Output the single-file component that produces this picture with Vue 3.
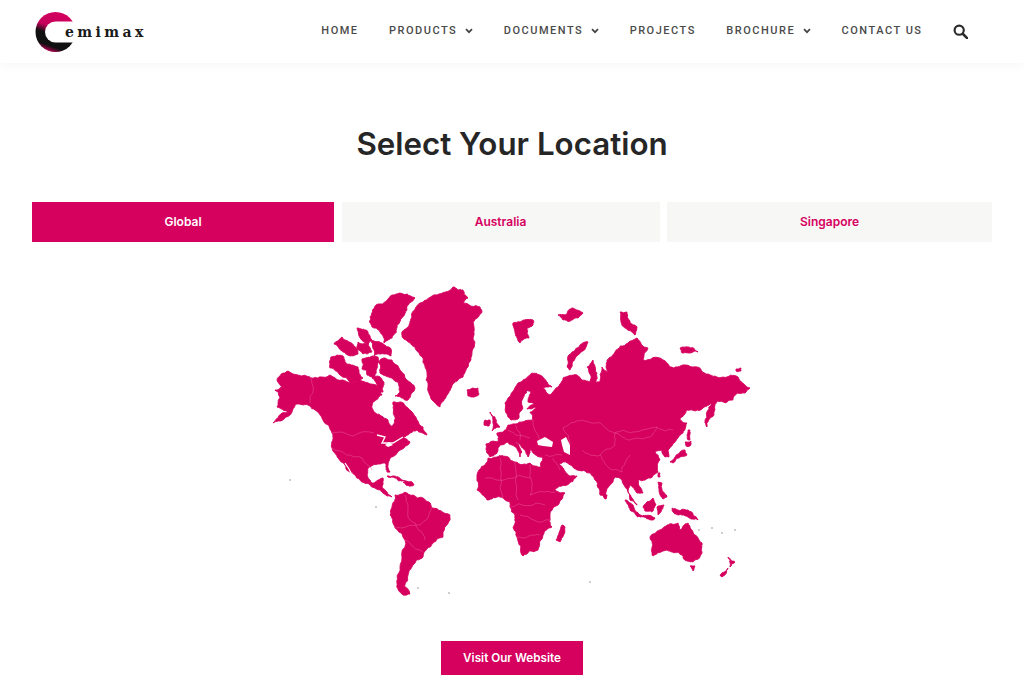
<script setup>
const navItems = [
  { label: 'HOME' },
  { label: 'PRODUCTS', caret: true },
  { label: 'DOCUMENTS', caret: true },
  { label: 'PROJECTS' },
  { label: 'BROCHURE', caret: true },
  { label: 'CONTACT US' }
];

const tabs = ['Global', 'Australia', 'Singapore'];

// map shapes, coordinates match the svg viewBox
const land = [
  // north + central america
  '277,380 288,371 310,377 318,378 330,375 343,380 348,382 367,385 377,387 382,395 373,402 372,408 380,415 388,420 392,427 395,417 393,402 400,402 408,408 417,420 423,427 427,435 417,430 410,433 403,437 410,442 397,453 390,458 388,465 390,472 387,472 385,463 368,468 367,475 372,483 380,479 383,478 382,487 387,492 392,497 383,493 375,488 362,482 355,475 345,465 338,458 332,448 332,433 323,420 315,410 303,405 295,405 292,412 273,423 288,412 277,407 280,397 275,390 282,387',
  // arctic islands
  '415,298 407,294 392,295 378,304 370,317 372,327 380,332 384,343 392,338 397,325 407,310',
  '334,344 342,337 349,342 357,349 358,354 350,356 342,351',
  '357,328 366,330 372,340 368,344 360,338',
  '358,342 368,343 372,352 363,354 357,349',
  '371,340 382,343 391,349 391,356 374,356',
  '331,357 343,356 345,362 358,367 363,378 350,382 340,375 330,368',
  '362,359 369,357 369,370 362,369',
  '370,357 378,357 377,368 373,378 367,375',
  '378,362 385,358 392,360 400,370 407,380 415,388 408,400 405,400 395,396 400,392 398,382 392,378 386,376 380,373',
  '350,382 362,381 370,384 378,386 372,378 378,376 384,382 383,392 376,388 360,388',
  // greenland + iceland
  '420,303 437,295 453,287 463,290 468,298 463,303 480,307 482,312 473,322 473,338 472,352 468,367 463,377 452,385 447,395 440,407 432,400 428,387 427,373 423,358 415,347 403,338 402,332 410,323 412,313',
  '467,390 478,388 479,394 474,397 468,396',
  // caribbean
  '387,476 394,476 402,480 408,482 399,481',
  '403,482 412,482 414,485 406,485',
  // south america
  '395,495 405,492 413,495 423,498 432,508 450,515 450,520 443,537 433,543 423,557 413,565 408,575 405,587 410,594 403,595 397,583 400,568 405,540 395,528 390,515 392,507',
  // eurasia
  '532,373 540,375 547,382 552,387 543,388 550,395 558,387 563,378 577,375 590,382 587,367 593,360 597,373 595,383 600,382 602,367 608,373 607,360 615,352 628,343 637,338 648,348 643,360 663,360 670,367 685,365 697,367 710,375 723,377 738,377 750,388 745,393 737,393 733,400 717,401 714,415 707,427 705,423 707,412 712,403 703,408 687,410 680,420 687,423 683,433 675,442 668,450 669,457 665,457 662,450 655,452 660,460 658,472 645,480 638,480 643,493 637,493 630,485 628,492 637,505 630,500 622,480 615,477 605,497 600,495 595,480 590,473 577,470 563,462 559,464 564,470 571,476 577,476 567,485 553,491 541,468 543,458 533,453 530,448 528,457 525,450 515,442 522,452 520,457 512,445 507,442 500,445 497,453 490,457 487,453 486,444 498,442 497,433 503,432 508,425 515,424 525,421 533,420 530,412 537,408 527,409 534,404 528,402 531,393 527,390 522,400 523,408 518,419 511,420 505,403 518,383',
  // africa
  '477,477 485,465 488,458 497,457 508,457 515,462 530,463 541,467 555,490 565,493 558,505 550,515 552,527 543,535 538,550 523,556 517,537 513,528 515,515 510,507 510,502 500,497 487,500 477,490',
  // uk, ireland
  '490,412 495,417 500,427 492,431 493,423',
  '485,420 490,420 489,426 484,425',
  // russian arctic
  '513,323 520,322 533,320 533,325 527,328 529,338 520,343 515,333',
  '558,315 565,315 573,308 583,313 578,318 572,320 563,320',
  '620,312 627,312 630,323 637,327 635,335 628,330 621,322',
  '588,342 578,355 570,370 567,367 572,352 580,345',
  '680,348 688,347 698,352 690,353 682,353',
  '736,369 741,368 741,371 736,371',
  // japan, east asia islands
  '670,462 685,450 687,455 673,463',
  '685,442 691,441 690,446 686,446',
  '688,430 690,430 690,440 688,440',
  '658,473 660,473 660,477 658,477',
  '658,482 662,483 662,490 667,497 663,499 659,490',
  '625,500 633,505 640,515 638,517 630,510',
  '638,515 655,518 653,520 640,517',
  '643,507 653,498 656,505 652,512 645,511',
  '657,507 664,505 661,512 658,515',
  '672,508 678,510 688,510 698,520 688,517 682,515 673,512',
  // oceania
  '650,537 660,530 667,525 678,523 680,530 688,523 695,535 702,543 702,553 693,562 685,560 678,552 667,550 653,556 652,547',
  '690,566 695,566 693,571',
  '728,557 735,562 730,567',
  '728,568 722,577 720,575',
  // madagascar, sri lanka
  '562,525 565,527 560,542 556,540',
  '604,494 607,495 606,499 604,498'
];

// white water bodies on top of the land
const water = [
  '537,441 545,437 553,442 552,447 543,446 538,445',
  '561,440 566,437 570,445 570,455 564,452 562,445',
  '385,445 389,442 393,445 388,447'
];

const channels = [
  '377,435 385,437 382,443 393,443 403,437',
  '345,463 349,469 352,475'
];

const borders = [
  '310,377 310,403', '332,433 374,433', '332,448 362,458 372,470',
  '563,428 582,420 600,423 615,433 633,432 657,427 673,430',
  '615,433 630,440 650,437 657,427',
  '563,428 570,445', '582,450 600,455 615,445 615,433',
  '600,455 612,470 622,472 630,455',
  '533,420 540,440', '515,425 520,440', '508,430 530,438',
  '545,455 562,455', '553,458 560,470',
  '485,478 530,478', '500,458 503,497', '515,462 518,500', '530,465 530,495',
  '510,507 545,505', '520,515 550,520', '517,537 540,535', '530,495 555,492',
  '405,495 410,520 425,540', '395,528 420,525 432,508', '405,540 423,552'
];

const specks = [
  [290, 480], [376, 507], [418, 588], [449, 593], [590, 582], [699, 530], [712, 528], [735, 530], [722, 533]
];

// midpoint displacement so the hand-plotted outlines read as coastline
let seed = 4711;
const rand = () => {
  seed = (seed * 16807) % 2147483647;
  return seed / 2147483647 - 0.5;
};

const roughen = (str, closed, amount) => {
  let pts = str.split(' ').map((p) => p.split(',').map(Number));
  for (let pass = 0; pass < 3; pass++) {
    const next = [];
    const count = closed ? pts.length : pts.length - 1;
    for (let i = 0; i < count; i++) {
      const a = pts[i];
      const b = pts[(i + 1) % pts.length];
      const dx = b[0] - a[0];
      const dy = b[1] - a[1];
      next.push(a);
      if (Math.hypot(dx, dy) < 2) continue;
      const k = rand() * amount;
      next.push([(a[0] + b[0]) / 2 - dy * k, (a[1] + b[1]) / 2 + dx * k]);
    }
    if (!closed) next.push(pts[pts.length - 1]);
    pts = next;
  }
  return pts.map((p) => p[0].toFixed(1) + ',' + p[1].toFixed(1)).join(' ');
};

const landShapes = land.map((p) => roughen(p, true, 0.3));
const borderLines = borders.map((p) => roughen(p, false, 0.3));
</script>

<template>
  <div class="page">
    <header class="site-header">
      <a class="logo">
        <svg class="logo__mark" viewBox="0 0 44 44" width="44" height="44">
          <defs>
            <linearGradient id="ring" x1="0.7" y1="0" x2="0.35" y2="1">
              <stop offset="0" stop-color="#d6005f" />
              <stop offset="0.42" stop-color="#c4005a" />
              <stop offset="0.6" stop-color="#111" />
              <stop offset="0.86" stop-color="#111" />
              <stop offset="1" stop-color="#c8005a" />
            </linearGradient>
          </defs>
          <circle cx="21.5" cy="22" r="20" fill="url(#ring)" />
          <rect x="11" y="11.5" width="40" height="21" rx="10.5" fill="#fff" />
        </svg>
        <span class="logo__text">emimax</span>
      </a>
      <nav class="nav">
        <span v-for="item in navItems" :key="item.label" class="nav__item">
          {{ item.label }}
          <svg v-if="item.caret" class="nav__caret" viewBox="0 0 8 6" width="8" height="6">
            <path d="M1 1.2L4 4.2L7 1.2" fill="none" stroke="#444" stroke-width="1.7" />
          </svg>
        </span>
        <svg class="nav__search" viewBox="0 0 16 16" width="15" height="15">
          <circle cx="6.6" cy="6.6" r="4.9" fill="none" stroke="#2b2b2b" stroke-width="2.3" />
          <path d="M10.4 10.4L15 15" stroke="#2b2b2b" stroke-width="2.7" stroke-linecap="round" />
        </svg>
      </nav>
    </header>

    <main class="content">
      <h1 class="title">Select Your Location</h1>
      <div class="tabs">
        <button
          v-for="(tab, index) in tabs"
          :key="tab"
          class="tab"
          :class="{ tab_active: index === 0 }"
        >
          {{ tab }}
        </button>
      </div>

      <svg class="map" viewBox="267 280 490 325" width="490" height="325">
        <polygon
          v-for="(points, i) in landShapes"
          :key="i"
          :points="points"
          fill="#d6005f"
          stroke="#d6005f"
          stroke-width="0.9"
          stroke-linejoin="round"
        />
        <polygon v-for="points in water" :key="points" :points="points" fill="#fff" />
        <polyline v-for="points in channels" :key="points" :points="points" fill="none" stroke="#fff" stroke-width="1.3" />
        <polyline v-for="(points, i) in borderLines" :key="i" :points="points" fill="none" stroke="#ea5a95" stroke-width="0.5" />
        <circle v-for="s in specks" :key="s[0]" :cx="s[0]" :cy="s[1]" r="0.8" fill="#9a8a92" />
      </svg>

      <a class="visit">Visit Our Website</a>
    </main>
  </div>
</template>

<style scoped>
.page {
  height: 675px;
  overflow: hidden;
  background: #fff;
  font-family: Inter, "Liberation Sans", sans-serif;
}

.site-header {
  display: flex;
  align-items: center;
  justify-content: space-between;
  height: 63px;
  padding: 0 56px 0 34px;
  box-shadow: 0 3px 10px rgba(0, 0, 0, 0.035);
}

.logo {
  display: flex;
  align-items: center;
}

.logo__text {
  margin-left: -13px;
  margin-top: 1px;
  font-family: "DejaVu Serif", serif;
  font-size: 14px;
  font-weight: 700;
  letter-spacing: 3.4px;
  color: #1a1a1a;
}

.nav {
  display: flex;
  align-items: center;
  gap: 30.5px;
}

.nav__item {
  display: flex;
  align-items: center;
  padding-bottom: 2px;
  font-family: Roboto, "Liberation Sans", sans-serif;
  font-size: 11px;
  font-weight: 500;
  letter-spacing: 1.5px;
  color: #4a4a4a;
}

.nav__caret {
  margin-left: 8px;
}

.nav__search {
  margin-bottom: 1px;
}

.content {
  display: flex;
  flex-direction: column;
  align-items: center;
  padding: 0 32px;
}

.title {
  margin: 63px 0 0;
  height: 76px;
  font-size: 31.3px;
  line-height: 36px;
  font-weight: 600;
  color: #262626;
}

.tabs {
  display: grid;
  grid-template-columns: 302px 318px 325px;
  gap: 7.5px;
  width: 100%;
}

.tab {
  height: 40px;
  border: 0;
  padding: 0 0 2px;
  background: #f7f7f5;
  font-family: inherit;
  font-size: 12px;
  font-weight: 600;
  color: #d6005f;
}

.tab_active {
  background: #d6005f;
  color: #fff;
}

.map {
  display: block;
  margin-top: 38px;
  flex: none;
}

.visit {
  display: flex;
  align-items: center;
  justify-content: center;
  flex: none;
  width: 142px;
  height: 36px;
  margin-top: 36px;
  padding-bottom: 2px;
  box-sizing: border-box;
  background: #d6005f;
  font-size: 11.7px;
  font-weight: 600;
  color: #fff;
}
</style>
